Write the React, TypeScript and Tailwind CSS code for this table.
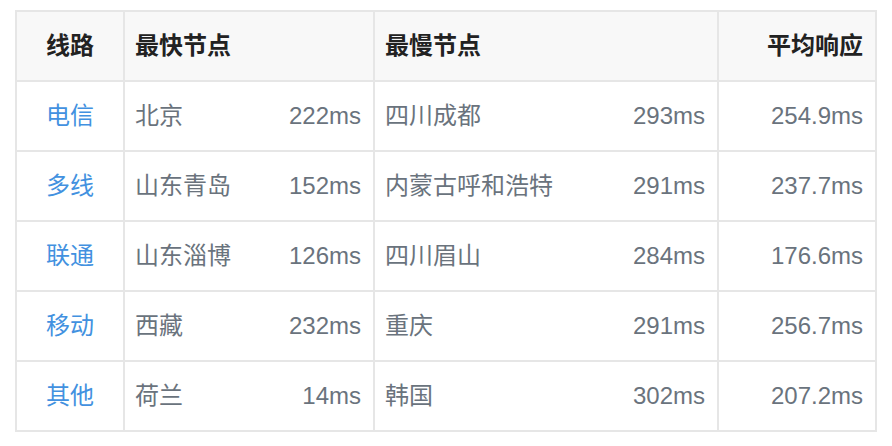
const rows = [
  { line: '电信', fast: '北京', fastMs: '222ms', slow: '四川成都', slowMs: '293ms', avg: '254.9ms' },
  { line: '多线', fast: '山东青岛', fastMs: '152ms', slow: '内蒙古呼和浩特', slowMs: '291ms', avg: '237.7ms' },
  { line: '联通', fast: '山东淄博', fastMs: '126ms', slow: '四川眉山', slowMs: '284ms', avg: '176.6ms' },
  { line: '移动', fast: '西藏', fastMs: '232ms', slow: '重庆', slowMs: '291ms', avg: '256.7ms' },
  { line: '其他', fast: '荷兰', fastMs: '14ms', slow: '韩国', slowMs: '302ms', avg: '207.2ms' },
];

export default function App() {
  return (
    <main
      className="min-h-screen bg-white pt-[10px] pl-[15px]"
      style={{ fontFamily: '"Liberation Sans", "Noto Sans CJK SC", sans-serif' }}
    >
      <table className="w-[860px] table-fixed border-collapse text-[24px]">
        <colgroup>
          <col className="w-[108px]" />
          <col className="w-[150px]" />
          <col className="w-[100px]" />
          <col className="w-[220px]" />
          <col className="w-[124px]" />
          <col className="w-[158px]" />
        </colgroup>
        <thead>
          <tr className="h-[70px] bg-[#f8f8f8] text-[#222] font-bold">
            <th className="border-2 border-[#e6e6e6] text-center">线路</th>
            <th colSpan={2} className="border-2 border-[#e6e6e6] text-left pl-[10px]">
              最快节点
            </th>
            <th colSpan={2} className="border-2 border-[#e6e6e6] text-left pl-[10px]">
              最慢节点
            </th>
            <th className="border-2 border-[#e6e6e6] text-right pr-3">平均响应</th>
          </tr>
        </thead>
        <tbody>
          {rows.map((r) => (
            <tr key={r.line} className="h-[70px] text-[#6a737d]">
              <td className="border-2 border-[#e6e6e6] text-center text-[#4291e0]">{r.line}</td>
              <td className="border-y-2 border-l-2 border-[#e6e6e6] text-left pl-[10px]">{r.fast}</td>
              <td className="border-y-2 border-r-2 border-[#e6e6e6] text-right pr-3">{r.fastMs}</td>
              <td className="border-y-2 border-l-2 border-[#e6e6e6] text-left pl-[10px]">{r.slow}</td>
              <td className="border-y-2 border-r-2 border-[#e6e6e6] text-right pr-3">{r.slowMs}</td>
              <td className="border-2 border-[#e6e6e6] text-right pr-3">{r.avg}</td>
            </tr>
          ))}
        </tbody>
      </table>
    </main>
  );
}
